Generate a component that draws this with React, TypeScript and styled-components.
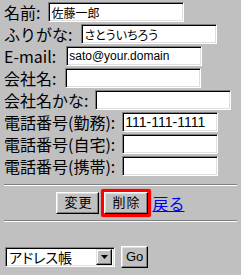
import React from 'react';
import styled, { createGlobalStyle } from 'styled-components';

const GlobalStyle = createGlobalStyle`
  body {
    margin: 0;
    background: #c0c0c0;
    font-family: "Noto Sans CJK JP", "Liberation Sans", sans-serif;
    color: #000;
  }
`;

type Field = {
  label: string;
  value?: string;
  width: number;
  gap: number;
  big?: boolean;
};

const fields: Field[] = [
  { label: '名前:', value: '佐藤一郎', width: 136, gap: 8 },
  { label: 'ふりがな:', value: 'さとういちろう', width: 136, gap: 9 },
  { label: 'E-mail:', value: 'sato@your.domain', width: 136, gap: 10 },
  { label: '会社名:', width: 136, gap: 9 },
  { label: '会社名かな:', width: 136, gap: 7 },
  { label: '電話番号(勤務):', value: '111-111-1111', width: 96, gap: 7, big: true },
  { label: '電話番号(自宅):', width: 96, gap: 7 },
  { label: '電話番号(携帯):', width: 96, gap: 7 },
];

const App: React.FC = () => (
  <>
    <GlobalStyle />
    <Page>
      <Form>
        {fields.map((f) => (
          <Row key={f.label}>
            <Label $gap={f.gap}>{f.label}</Label>
            <TextInput $width={f.width} $big={f.big} defaultValue={f.value} />
          </Row>
        ))}
      </Form>
      <Rule $top={8} />
      <Actions>
        <Button>変更</Button>
        <Highlight>
          <Button>削除</Button>
        </Highlight>
        <BackLink href="#">戻る</BackLink>
      </Actions>
      <Rule $top={3} />
      <Jump>
        <SelectBox>
          <Select defaultValue="address">
            <option value="address">アドレス帳</option>
          </Select>
          <Arrow>
            <svg width="7" height="4" viewBox="0 0 7 4">
              <path d="M0 0h7L3.5 4z" fill="#000" />
            </svg>
          </Arrow>
        </SelectBox>
        <Button $small>Go</Button>
      </Jump>
    </Page>
  </>
);

export default App;

const Page = styled.div`
  padding: 2px 4px;
  width: 233px;
`;

const Form = styled.div`
  display: flex;
  flex-direction: column;
  gap: 2px;
`;

const Row = styled.div`
  display: flex;
  align-items: center;
  height: 20px;
`;

const Label = styled.span<{ $gap: number }>`
  font-size: 16px;
  line-height: 20px;
  white-space: nowrap;
  margin-right: ${(p) => p.$gap}px;
`;

const TextInput = styled.input<{ $width: number; $big?: boolean }>`
  box-sizing: border-box;
  width: ${(p) => p.$width}px;
  height: 20px;
  margin: 0;
  padding: 0 2px;
  background: #fff;
  border: 1px solid;
  border-color: #808080 #fff #fff #808080;
  box-shadow: inset 1px 1px #000, inset -1px -1px #dfdfdf;
  font-family: "Liberation Sans", "Noto Sans CJK JP", sans-serif;
  font-size: ${(p) => (p.$big ? 14 : 12)}px;
  font-feature-settings: "palt";
  color: #000;
  outline: none;
`;

const Rule = styled.hr<{ $top: number }>`
  margin: ${(p) => p.$top}px 0 0;
  border: none;
  height: 1px;
  background: #808080;
  border-bottom: 1px solid #fff;
`;

const Actions = styled.div`
  display: flex;
  align-items: center;
  justify-content: center;
  gap: 2px;
  margin-top: 3px;
`;

const Button = styled.button<{ $small?: boolean }>`
  box-sizing: border-box;
  height: 22px;
  margin: 0;
  padding: ${(p) => (p.$small ? '0 4px' : '0 6px 0 7px')};
  background: #c0c0c0;
  border: 1px solid;
  border-color: #fff #000 #000 #fff;
  box-shadow: inset -1px -1px #808080, inset 1px 1px #dfdfdf;
  font-family: "Liberation Sans", "Noto Sans CJK JP", sans-serif;
  font-size: 13px;
  letter-spacing: ${(p) => (p.$small ? 0 : 1)}px;
  line-height: 18px;
  color: #000;
`;

const Highlight = styled.span`
  display: flex;
  border: 3px solid #ff0000;
  border-radius: 2px;
  box-shadow: 0 0 1px #ff0000;
`;

const BackLink = styled.a`
  font-size: 16px;
  color: #0000ee;
  text-decoration: underline;
  line-height: 20px;
`;

const Jump = styled.div`
  display: flex;
  align-items: center;
  gap: 6px;
  margin-top: 24px;
  padding-left: 1px;
`;

const SelectBox = styled.div`
  box-sizing: border-box;
  display: flex;
  align-items: center;
  width: 110px;
  height: 20px;
  background: #fff;
  border: 1px solid;
  border-color: #808080 #fff #fff #808080;
  box-shadow: inset 1px 1px #000, inset -1px -1px #dfdfdf;
  padding: 2px;
`;

const Select = styled.select`
  appearance: none;
  flex: 1;
  min-width: 0;
  border: none;
  background: transparent;
  padding: 0 1px;
  margin: 0;
  font-family: "Noto Sans CJK JP", sans-serif;
  font-size: 14px;
  font-feature-settings: "palt";
  line-height: 16px;
  color: #000;
  outline: none;
`;

const Arrow = styled.span`
  box-sizing: border-box;
  display: flex;
  align-items: center;
  justify-content: center;
  width: 16px;
  height: 16px;
  background: #c0c0c0;
  border: 1px solid;
  border-color: #dfdfdf #000 #000 #dfdfdf;
  box-shadow: inset -1px -1px #808080, inset 1px 1px #fff;
`;
